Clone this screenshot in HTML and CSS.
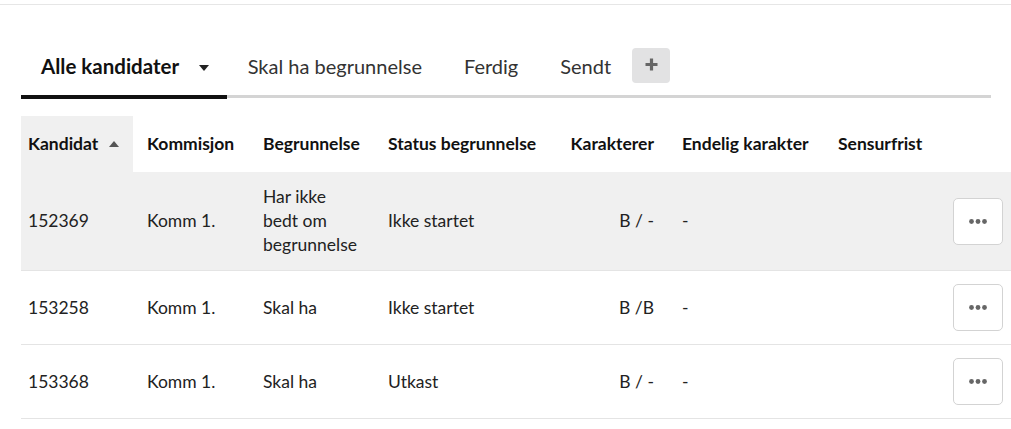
FILE: index.html
```html
<!DOCTYPE html>
<html lang="no">
<head>
    <meta charset="UTF-8">
    <title>Kandidater</title>
    <link rel="stylesheet" href="styles.css">
</head>
<body>
    <div class="topbar"></div>

    <div class="page">
        <ul class="tabs">
            <li class="tab active">Alle kandidater <span class="caret-down"></span></li>
            <li class="tab">Skal ha begrunnelse</li>
            <li class="tab">Ferdig</li>
            <li class="tab">Sendt</li>
            <li class="tab-add">
                <button class="btn-add" title="Legg til">
                    <svg width="13" height="13" viewBox="0 0 13 13"><path d="M6.5 0.5v12M0.5 6.5h12" stroke="#666" stroke-width="3.2"/></svg>
                </button>
            </li>
        </ul>

        <table class="candidates">
            <colgroup>
                <col style="width: 112px">
                <col style="width: 116px">
                <col style="width: 125px">
                <col style="width: 179px">
                <col style="width: 115px">
                <col style="width: 156px">
                <col style="width: 115px">
                <col style="width: 77px">
            </colgroup>
            <thead>
                <tr>
                    <th class="sorted">Kandidat <span class="caret-up"></span></th>
                    <th>Kommisjon</th>
                    <th>Begrunnelse</th>
                    <th>Status begrunnelse</th>
                    <th class="num">Karakterer</th>
                    <th>Endelig karakter</th>
                    <th>Sensurfrist</th>
                    <th></th>
                </tr>
            </thead>
            <tbody>
                <tr class="hover">
                    <td>152369</td>
                    <td>Komm 1.</td>
                    <td><div class="reason">Har ikke bedt om begrunnelse</div></td>
                    <td>Ikke startet</td>
                    <td class="num">B / -</td>
                    <td>-</td>
                    <td></td>
                    <td><button class="btn-more"><svg width="18" height="5" viewBox="0 0 18 5"><circle cx="2.5" cy="2.5" r="2.4"/><circle cx="9" cy="2.5" r="2.4"/><circle cx="15.5" cy="2.5" r="2.4"/></svg></button></td>
                </tr>
                <tr>
                    <td>153258</td>
                    <td>Komm 1.</td>
                    <td><div class="reason">Skal ha</div></td>
                    <td>Ikke startet</td>
                    <td class="num">B /B</td>
                    <td>-</td>
                    <td></td>
                    <td><button class="btn-more"><svg width="18" height="5" viewBox="0 0 18 5"><circle cx="2.5" cy="2.5" r="2.4"/><circle cx="9" cy="2.5" r="2.4"/><circle cx="15.5" cy="2.5" r="2.4"/></svg></button></td>
                </tr>
                <tr>
                    <td>153368</td>
                    <td>Komm 1.</td>
                    <td><div class="reason">Skal ha</div></td>
                    <td>Utkast</td>
                    <td class="num">B / -</td>
                    <td>-</td>
                    <td></td>
                    <td><button class="btn-more"><svg width="18" height="5" viewBox="0 0 18 5"><circle cx="2.5" cy="2.5" r="2.4"/><circle cx="9" cy="2.5" r="2.4"/><circle cx="15.5" cy="2.5" r="2.4"/></svg></button></td>
                </tr>
            </tbody>
        </table>
    </div>
</body>
</html>
```

FILE: styles.css
```css
html, body {
    margin: 0;
    padding: 0;
    overflow: hidden;
}
body {
    font-family: Lato, "Liberation Sans", sans-serif;
    color: #222;
    background-color: white;
}
.topbar {
    height: 4px;
    border-bottom: 1px solid #e6e6e6;
}
.page {
    padding: 0 0 0 21px;
}
.tabs {
    display: flex;
    list-style: none;
    margin: 37px 20px 0 0;
    padding: 0;
    border-bottom: 3px solid #d4d4d4;
}
.tab {
    font-size: 20px;
    line-height: 24px;
    padding: 12px 21px 17px;
    color: #333;
}
.tab.active {
    font-size: 20.5px;
    font-weight: bold;
    color: #111;
    padding-left: 20px;
    padding-right: 18px;
    border-bottom: 4px solid #111;
    margin-bottom: -4px;
}
.caret-down {
    display: inline-block;
    width: 0;
    height: 0;
    margin-left: 15px;
    vertical-align: 3px;
    border-left: 5.5px solid transparent;
    border-right: 5.5px solid transparent;
    border-top: 6px solid #222;
}
.tab-add {
    padding-top: 6px;
}
.btn-add {
    display: flex;
    align-items: center;
    justify-content: center;
    width: 38px;
    height: 35px;
    border: none;
    border-radius: 4px;
    background-color: #e2e2e3;
    padding: 0 0 2px;
}
.candidates {
    margin-top: 18px;
    table-layout: fixed;
    width: 995px;
    border-collapse: collapse;
    font-size: 17.5px;
}
.candidates th,
.candidates td {
    padding: 16px 14px;
    line-height: 24px;
    text-align: left;
    vertical-align: middle;
}
.candidates th:first-child,
.candidates td:first-child {
    padding-left: 7px;
}
.candidates th {
    font-weight: bold;
    color: #111;
    white-space: nowrap;
}
.candidates th.sorted {
    background-color: #f0f0f0;
}
.candidates td {
    padding-top: 13px;
    padding-bottom: 13px;
    border-bottom: 1px solid #e4e4e4;
    color: #222;
}
.candidates .num {
    text-align: right;
}
.candidates tr.hover td {
    background-color: #f0f0f0;
}
.caret-up {
    display: inline-block;
    width: 0;
    height: 0;
    margin-left: 6px;
    vertical-align: 3px;
    border-left: 5.5px solid transparent;
    border-right: 5.5px solid transparent;
    border-bottom: 6px solid #555;
}
.reason {
    width: 100px;
}
.btn-more {
    display: flex;
    align-items: center;
    justify-content: center;
    width: 50px;
    height: 47px;
    border: 1px solid #d3d3d3;
    border-radius: 5px;
    background-color: white;
    padding: 0;
}
.btn-more svg {
    fill: #666;
}
```
